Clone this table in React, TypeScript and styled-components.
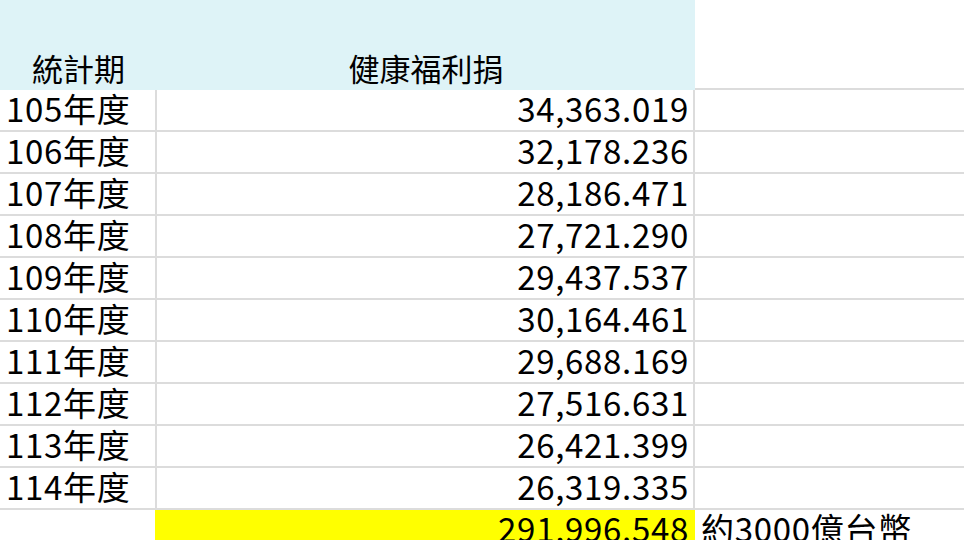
import styled, { createGlobalStyle } from "styled-components";

const GlobalStyle = createGlobalStyle`
    html, body {
        margin: 0;
        padding: 0;
        background: #ffffff;
    }
    body {
        font-family: "Noto Sans CJK TC", "Noto Sans", sans-serif;
        color: #000000;
        overflow: hidden;
    }
`;

const line = "#dcdcdc";

const Sheet = styled.div`
    width: 964px;
    height: 540px;
    overflow: hidden;
    display: grid;
    grid-template-columns: 157px 538px 1fr;
    grid-auto-rows: 42px;
    grid-template-rows: 90px;
`;

const HeadCell = styled.div<{ $blank?: boolean }>`
    background: ${(p) => (p.$blank ? "#ffffff" : "#def3f7")};
    border-bottom: ${(p) => (p.$blank ? `2px solid ${line}` : "none")};
    box-sizing: border-box;
    display: flex;
    align-items: flex-end;
    justify-content: center;
    padding-bottom: 2px;
    font-size: 31px;
    line-height: 40px;
`;

const Cell = styled.div<{ $align?: "left" | "right"; $fill?: string; $edge?: boolean }>`
    box-sizing: border-box;
    background: ${(p) => p.$fill ?? "#ffffff"};
    border-bottom: 2px solid ${(p) => p.$fill ?? line};
    border-right: ${(p) => (p.$edge ? `2px solid ${p.$fill ?? line}` : "none")};
    ${(p) => (p.$fill ? `box-shadow: -2px 0 0 ${p.$fill};` : "")}
    display: flex;
    align-items: center;
    justify-content: ${(p) => (p.$align === "right" ? "flex-end" : "flex-start")};
    padding: 0 4px 5px 6px;
    font-size: 33px;
    line-height: 34px;
    letter-spacing: 0.7px;
    white-space: nowrap;
`;

const rows = [
    { year: "105年度", amount: "34,363.019" },
    { year: "106年度", amount: "32,178.236" },
    { year: "107年度", amount: "28,186.471" },
    { year: "108年度", amount: "27,721.290" },
    { year: "109年度", amount: "29,437.537" },
    { year: "110年度", amount: "30,164.461" },
    { year: "111年度", amount: "29,688.169" },
    { year: "112年度", amount: "27,516.631" },
    { year: "113年度", amount: "26,421.399" },
    { year: "114年度", amount: "26,319.335" },
];

export default function App() {
    return (
        <>
            <GlobalStyle />
            <Sheet>
                <HeadCell>統計期</HeadCell>
                <HeadCell>健康福利捐</HeadCell>
                <HeadCell $blank />
                {rows.map((r) => (
                    <>
                        <Cell key={r.year} $edge>{r.year}</Cell>
                        <Cell key={r.amount} $edge $align="right">{r.amount}</Cell>
                        <Cell key={r.year + "-x"} />
                    </>
                ))}
                <Cell />
                <Cell $edge $align="right" $fill="#ffff00">291,996.548</Cell>
                <Cell>約3000億台幣</Cell>
            </Sheet>
        </>
    );
}
